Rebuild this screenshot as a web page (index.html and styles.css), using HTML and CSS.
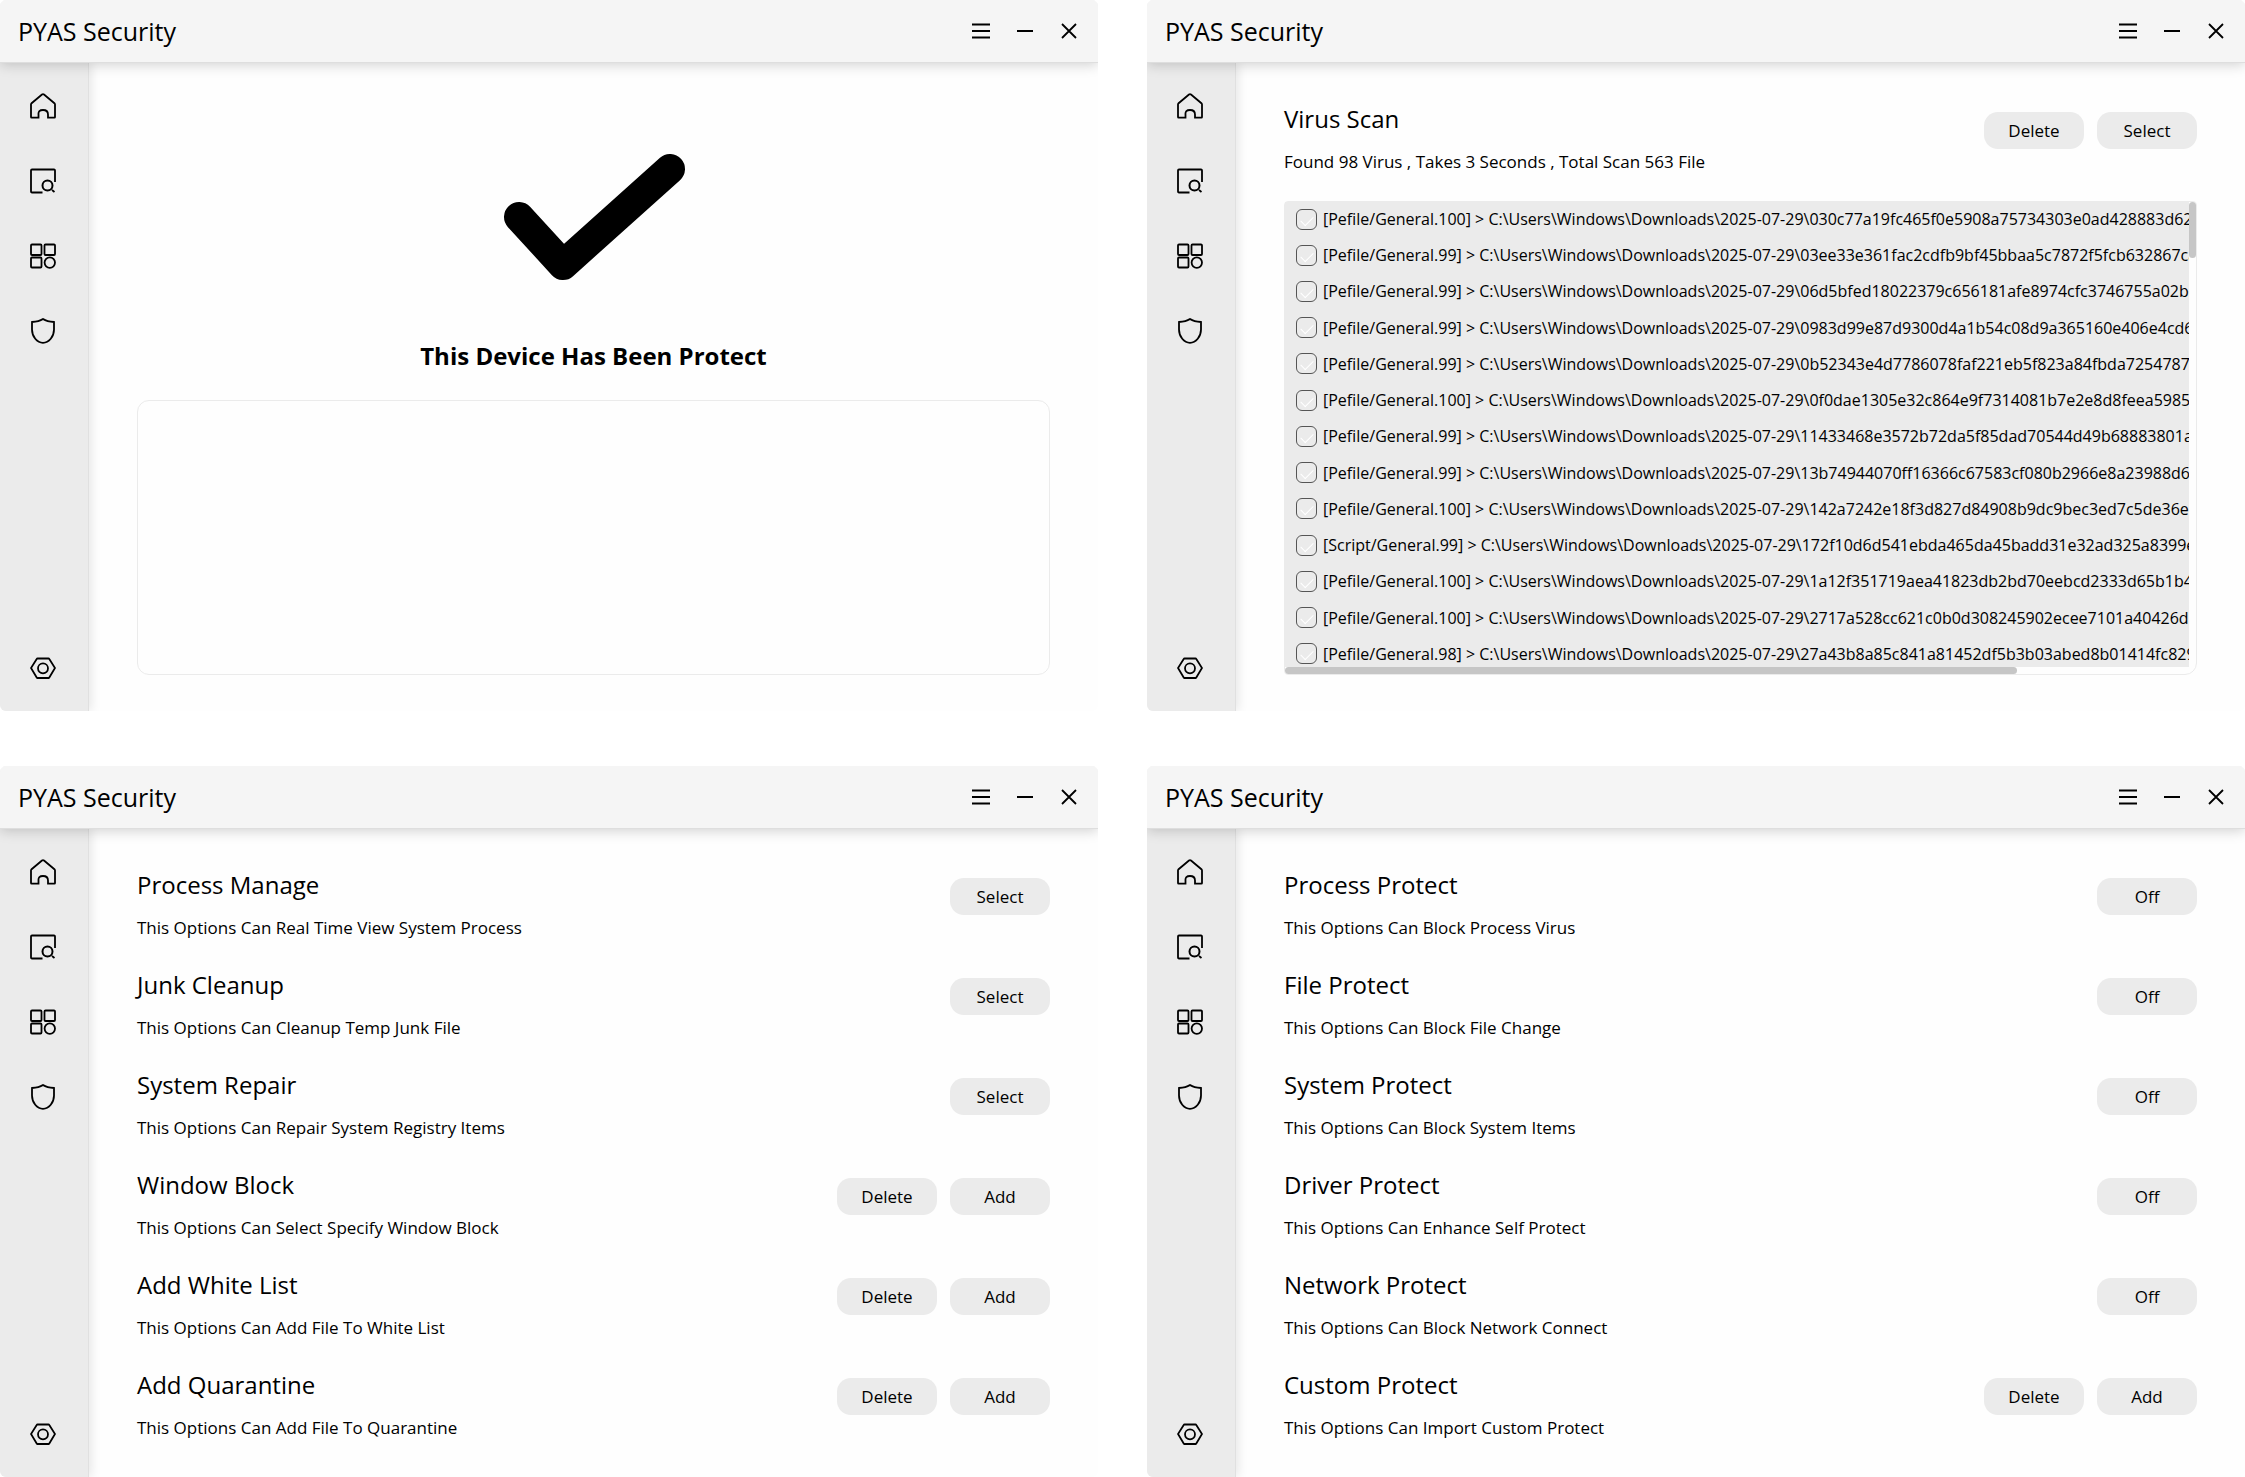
FILE: index.html
```
<!DOCTYPE html>
<html lang="en">
<head>
<meta charset="utf-8">
<title>PYAS Security</title>
<link rel="stylesheet" href="styles.css">
</head>
<body>
<svg class="sprite" aria-hidden="true">
  <symbol id="i-home" viewBox="0 0 26 26"><path d="M1 24V11.500Q1 10.800 1.600 10.200L12 1.500Q13 .700 14 1.500L24.400 10.200Q25 10.800 25 11.500V24Q25 24.600 24.400 24.600H18V21.500Q18 17 13 17T8.500 21.500V24.600H1.600Q1 24.600 1 24Z"/></symbol>
  <symbol id="i-scan" viewBox="0 0 26 26"><path d="M12.500 24.500H2Q1 24.500 1 23.500V2.500Q1 1.500 2 1.500H24Q25 1.500 25 2.500V14M22 22L24.500 24"/><circle cx="17.500" cy="17.500" r="5" stroke-width="2"/></symbol>
  <symbol id="i-tools" viewBox="0 0 26 26"><rect x="1" y="1.500" width="10.500" height="10.500" rx="1"/><rect x="14.500" y="1.500" width="10.500" height="10.500" rx="1"/><rect x="1" y="14.500" width="10.500" height="10" rx="1"/><circle cx="19.800" cy="19.600" r="5.200"/></symbol>
  <symbol id="i-shield" viewBox="0 0 26 26"><path d="M13 1Q17 3.600 24 4V11.500C24 18.500 19 24.800 13 24.800S2 18.500 2 11.500V4Q9 3.600 13 1Z"/></symbol>
  <symbol id="i-gear" viewBox="0 0 26 26"><path d="M7.500 3.500H18.500Q19 3.500 19.300 4L25 13L19.300 22.500Q19 23 18.500 23H7.500Q7 23 6.700 22.500L1 13L6.700 4Q7 3.500 7.500 3.500Z"/><circle cx="13" cy="13.300" r="5"/></symbol>
  <symbol id="i-menu" viewBox="0 0 20 20"><path d="M1 3.500H19M1 10H19M1 16.500H19"/></symbol>
  <symbol id="i-min" viewBox="0 0 20 20"><path d="M2 10H18" stroke-width="2.200"/></symbol>
  <symbol id="i-close" viewBox="0 0 20 20"><path d="M3 3L17 17M17 3L3 17"/></symbol>
</svg>

<div class="board">

  <section class="window">
    <header class="titlebar">
      <h1 class="app-name">PYAS Security</h1>
      <div class="controls">
        <button class="icon-btn" aria-label="Menu"><svg><use href="#i-menu"/></svg></button>
        <button class="icon-btn" aria-label="Minimize"><svg><use href="#i-min"/></svg></button>
        <button class="icon-btn" aria-label="Close"><svg><use href="#i-close"/></svg></button>
      </div>
    </header>
    <div class="body">
      <nav class="sidebar">
        <button class="nav-btn" aria-label="Home"><svg><use href="#i-home"/></svg></button>
        <button class="nav-btn" aria-label="Scan"><svg><use href="#i-scan"/></svg></button>
        <button class="nav-btn" aria-label="Tools"><svg><use href="#i-tools"/></svg></button>
        <button class="nav-btn" aria-label="Protect"><svg><use href="#i-shield"/></svg></button>
        <button class="nav-btn nav-last" aria-label="Settings"><svg><use href="#i-gear"/></svg></button>
      </nav>
      <main class="content">
        <div class="status">
          <svg class="status-icon" viewBox="0 0 184 128"><path d="M17 63L61 111L168 15"/></svg>
          <h2 class="status-title">This Device Has Been Protect</h2>
        </div>
        <div class="log"></div>
      </main>
    </div>
  </section>

  <section class="window">
    <header class="titlebar">
      <h1 class="app-name">PYAS Security</h1>
      <div class="controls">
        <button class="icon-btn" aria-label="Menu"><svg><use href="#i-menu"/></svg></button>
        <button class="icon-btn" aria-label="Minimize"><svg><use href="#i-min"/></svg></button>
        <button class="icon-btn" aria-label="Close"><svg><use href="#i-close"/></svg></button>
      </div>
    </header>
    <div class="body">
      <nav class="sidebar">
        <button class="nav-btn" aria-label="Home"><svg><use href="#i-home"/></svg></button>
        <button class="nav-btn" aria-label="Scan"><svg><use href="#i-scan"/></svg></button>
        <button class="nav-btn" aria-label="Tools"><svg><use href="#i-tools"/></svg></button>
        <button class="nav-btn" aria-label="Protect"><svg><use href="#i-shield"/></svg></button>
        <button class="nav-btn nav-last" aria-label="Settings"><svg><use href="#i-gear"/></svg></button>
      </nav>
      <main class="content">
        <div class="option">
          <div class="option-text"><h2>Virus Scan</h2><p>Found 98 Virus , Takes 3 Seconds , Total Scan 563 File</p></div>
          <div class="actions"><button class="btn">Delete</button><button class="btn">Select</button></div>
        </div>
        <div class="results">
          <div class="viewport">
            <ul class="files">
              <li><label><input type="checkbox"><span>[Pefile/General.100] &gt; C:\Users\Windows\Downloads\2025-07-29\030c77a19fc465f0e5908a75734303e0ad428883d62bb6</span></label></li>
              <li><label><input type="checkbox"><span>[Pefile/General.99] &gt; C:\Users\Windows\Downloads\2025-07-29\03ee33e361fac2cdfb9bf45bbaa5c7872f5fcb632867ca73</span></label></li>
              <li><label><input type="checkbox"><span>[Pefile/General.99] &gt; C:\Users\Windows\Downloads\2025-07-29\06d5bfed18022379c656181afe8974cfc3746755a02b1bc</span></label></li>
              <li><label><input type="checkbox"><span>[Pefile/General.99] &gt; C:\Users\Windows\Downloads\2025-07-29\0983d99e87d9300d4a1b54c08d9a365160e406e4cd681b</span></label></li>
              <li><label><input type="checkbox"><span>[Pefile/General.99] &gt; C:\Users\Windows\Downloads\2025-07-29\0b52343e4d7786078faf221eb5f823a84fbda7254787c27</span></label></li>
              <li><label><input type="checkbox"><span>[Pefile/General.100] &gt; C:\Users\Windows\Downloads\2025-07-29\0f0dae1305e32c864e9f7314081b7e2e8d8feea5985351</span></label></li>
              <li><label><input type="checkbox"><span>[Pefile/General.99] &gt; C:\Users\Windows\Downloads\2025-07-29\11433468e3572b72da5f85dad70544d49b68883801a8de</span></label></li>
              <li><label><input type="checkbox"><span>[Pefile/General.99] &gt; C:\Users\Windows\Downloads\2025-07-29\13b74944070ff16366c67583cf080b2966e8a23988d6a06</span></label></li>
              <li><label><input type="checkbox"><span>[Pefile/General.100] &gt; C:\Users\Windows\Downloads\2025-07-29\142a7242e18f3d827d84908b9dc9bec3ed7c5de36e5c7</span></label></li>
              <li><label><input type="checkbox"><span>[Script/General.99] &gt; C:\Users\Windows\Downloads\2025-07-29\172f10d6d541ebda465da45badd31e32ad325a8399e2ee</span></label></li>
              <li><label><input type="checkbox"><span>[Pefile/General.100] &gt; C:\Users\Windows\Downloads\2025-07-29\1a12f351719aea41823db2bd70eebcd2333d65b1b48e1</span></label></li>
              <li><label><input type="checkbox"><span>[Pefile/General.100] &gt; C:\Users\Windows\Downloads\2025-07-29\2717a528cc621c0b0d308245902ecee7101a40426d13a</span></label></li>
              <li><label><input type="checkbox"><span>[Pefile/General.98] &gt; C:\Users\Windows\Downloads\2025-07-29\27a43b8a85c841a81452df5b3b03abed8b01414fc829193</span></label></li>
            </ul>
          </div>
          <div class="vbar"></div>
          <div class="hbar"></div>
        </div>
      </main>
    </div>
  </section>

  <section class="window">
    <header class="titlebar">
      <h1 class="app-name">PYAS Security</h1>
      <div class="controls">
        <button class="icon-btn" aria-label="Menu"><svg><use href="#i-menu"/></svg></button>
        <button class="icon-btn" aria-label="Minimize"><svg><use href="#i-min"/></svg></button>
        <button class="icon-btn" aria-label="Close"><svg><use href="#i-close"/></svg></button>
      </div>
    </header>
    <div class="body">
      <nav class="sidebar">
        <button class="nav-btn" aria-label="Home"><svg><use href="#i-home"/></svg></button>
        <button class="nav-btn" aria-label="Scan"><svg><use href="#i-scan"/></svg></button>
        <button class="nav-btn" aria-label="Tools"><svg><use href="#i-tools"/></svg></button>
        <button class="nav-btn" aria-label="Protect"><svg><use href="#i-shield"/></svg></button>
        <button class="nav-btn nav-last" aria-label="Settings"><svg><use href="#i-gear"/></svg></button>
      </nav>
      <main class="content">
        <div class="option">
          <div class="option-text"><h2>Process Manage</h2><p>This Options Can Real Time View System Process</p></div>
          <div class="actions"><button class="btn">Select</button></div>
        </div>
        <div class="option">
          <div class="option-text"><h2>Junk Cleanup</h2><p>This Options Can Cleanup Temp Junk File</p></div>
          <div class="actions"><button class="btn">Select</button></div>
        </div>
        <div class="option">
          <div class="option-text"><h2>System Repair</h2><p>This Options Can Repair System Registry Items</p></div>
          <div class="actions"><button class="btn">Select</button></div>
        </div>
        <div class="option">
          <div class="option-text"><h2>Window Block</h2><p>This Options Can Select Specify Window Block</p></div>
          <div class="actions"><button class="btn">Delete</button><button class="btn">Add</button></div>
        </div>
        <div class="option">
          <div class="option-text"><h2>Add White List</h2><p>This Options Can Add File To White List</p></div>
          <div class="actions"><button class="btn">Delete</button><button class="btn">Add</button></div>
        </div>
        <div class="option">
          <div class="option-text"><h2>Add Quarantine</h2><p>This Options Can Add File To Quarantine</p></div>
          <div class="actions"><button class="btn">Delete</button><button class="btn">Add</button></div>
        </div>
      </main>
    </div>
  </section>

  <section class="window">
    <header class="titlebar">
      <h1 class="app-name">PYAS Security</h1>
      <div class="controls">
        <button class="icon-btn" aria-label="Menu"><svg><use href="#i-menu"/></svg></button>
        <button class="icon-btn" aria-label="Minimize"><svg><use href="#i-min"/></svg></button>
        <button class="icon-btn" aria-label="Close"><svg><use href="#i-close"/></svg></button>
      </div>
    </header>
    <div class="body">
      <nav class="sidebar">
        <button class="nav-btn" aria-label="Home"><svg><use href="#i-home"/></svg></button>
        <button class="nav-btn" aria-label="Scan"><svg><use href="#i-scan"/></svg></button>
        <button class="nav-btn" aria-label="Tools"><svg><use href="#i-tools"/></svg></button>
        <button class="nav-btn" aria-label="Protect"><svg><use href="#i-shield"/></svg></button>
        <button class="nav-btn nav-last" aria-label="Settings"><svg><use href="#i-gear"/></svg></button>
      </nav>
      <main class="content">
        <div class="option">
          <div class="option-text"><h2>Process Protect</h2><p>This Options Can Block Process Virus</p></div>
          <div class="actions"><button class="btn">Off</button></div>
        </div>
        <div class="option">
          <div class="option-text"><h2>File Protect</h2><p>This Options Can Block File Change</p></div>
          <div class="actions"><button class="btn">Off</button></div>
        </div>
        <div class="option">
          <div class="option-text"><h2>System Protect</h2><p>This Options Can Block System Items</p></div>
          <div class="actions"><button class="btn">Off</button></div>
        </div>
        <div class="option">
          <div class="option-text"><h2>Driver Protect</h2><p>This Options Can Enhance Self Protect</p></div>
          <div class="actions"><button class="btn">Off</button></div>
        </div>
        <div class="option">
          <div class="option-text"><h2>Network Protect</h2><p>This Options Can Block Network Connect</p></div>
          <div class="actions"><button class="btn">Off</button></div>
        </div>
        <div class="option">
          <div class="option-text"><h2>Custom Protect</h2><p>This Options Can Import Custom Protect</p></div>
          <div class="actions"><button class="btn">Delete</button><button class="btn">Add</button></div>
        </div>
      </main>
    </div>
  </section>

</div>
</body>
</html>
```
FILE: styles.css
```
* { box-sizing: border-box; }

body {
  margin: 0;
  background: #fff;
  color: #000;
  font-family: "Segoe UI", "Open Sans", "Noto Sans", sans-serif;
  font-size: 17px;
}

h1, h2, p, ul { margin: 0; padding: 0; font-weight: 400; }
li { list-style: none; }

button {
  border: 0;
  padding: 0;
  background: none;
  font: inherit;
  color: inherit;
}

svg { display: block; fill: none; stroke: #000; stroke-width: 1.800; }
.sprite { display: none; }

.board {
  display: grid;
  grid-template-columns: repeat(2, minmax(0, 1fr));
  grid-auto-rows: 1fr;
  gap: 55px 49px;
  min-height: 100vh;
}

.window {
  display: flex;
  flex-direction: column;
  overflow: hidden;
  border-radius: 6px;
  background: #fefefe;
}

.titlebar {
  position: relative;
  z-index: 2;
  display: flex;
  align-items: center;
  justify-content: space-between;
  height: 63px;
  padding: 0 19px 0 18px;
  background: #f5f5f5;
  border-bottom: 1px solid #dedede;
  box-shadow: 0 2px 12px rgba(0, 0, 0, .18);
}

.app-name { font-size: 25px; line-height: 36px; }

.controls { display: flex; gap: 24px; }
.icon-btn, .icon-btn svg { width: 20px; height: 20px; }

.body { display: flex; flex: 1; }

.sidebar {
  display: flex;
  flex-direction: column;
  gap: 49px;
  width: 89px;
  padding: 30px 0 30px 30px;
  background: #ebebeb;
  border-right: 1px solid #e0e0e0;
  box-shadow: 2px 0 10px rgba(0, 0, 0, .1);
}

.nav-btn, .nav-btn svg { width: 26px; height: 26px; }
.nav-last { margin-top: auto; }

.content {
  display: flex;
  flex: 1;
  flex-direction: column;
  gap: 26px;
  min-width: 0;
  padding: 38px 48px 36px;
}

.option { display: flex; justify-content: space-between; min-height: 74px; }
.option-text { display: flex; flex-direction: column; gap: 13px; }
.option-text h2 { font-size: 24px; line-height: 36px; }
.option-text p { line-height: 24px; }

.actions { display: flex; gap: 13px; padding-top: 11px; }

.btn {
  width: 100px;
  height: 37px;
  border-radius: 14px;
  background: #ebebeb;
}

.status {
  display: flex;
  flex-direction: column;
  align-items: center;
  gap: 56px;
  padding-top: 53px;
}

.status-icon { width: 184px; height: 128px; stroke-width: 30; stroke-linecap: round; stroke-linejoin: round; }
.status-title { font-size: 24px; font-weight: 700; line-height: 36px; }

.log {
  flex: 1;
  border: 1px solid #ebebeb;
  border-radius: 12px;
}

.results {
  display: grid;
  flex: 1;
  grid-template-columns: minmax(0, 1fr) 7px;
  grid-template-rows: minmax(0, 1fr) 7px;
  border: 1px solid #ebebeb;
  border-radius: 4px 4px 12px 4px;
}

.viewport {
  height: 0;
  min-height: 100%;
  overflow: hidden;
  background: #ebebeb;
}

.files {
  display: grid;
  grid-auto-rows: 1fr;
  height: 471px;
}

.files label {
  display: flex;
  align-items: center;
  gap: 6px;
  height: 34px;
  padding-left: 11px;
  white-space: nowrap;
  font-size: 16px;
}

.files input {
  flex: none;
  appearance: none;
  display: grid;
  place-items: center;
  width: 21px;
  height: 21px;
  margin: 0;
  border: 1px solid #555;
  border-radius: 6px;
}

.files input::after {
  content: "";
  width: 11px;
  height: 6px;
  border: solid #fff;
  border-width: 0 0 1px 1px;
  rotate: -45deg;
}

.vbar, .hbar { border-radius: 4px; background: #c6c6c6; }
.vbar { height: 12%; }
.hbar { width: 81%; }
```
